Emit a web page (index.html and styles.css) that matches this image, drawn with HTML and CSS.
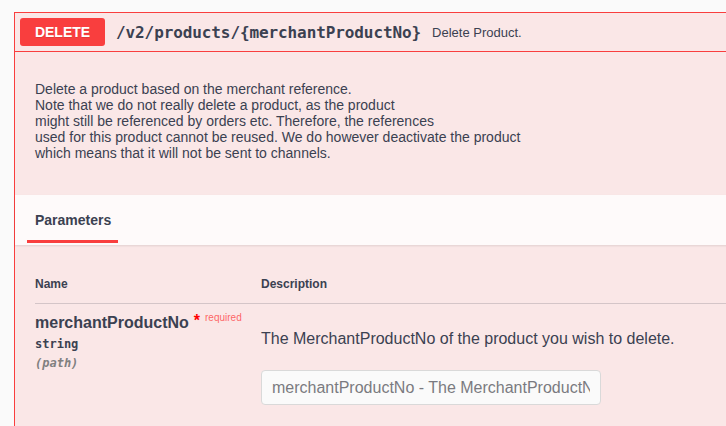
FILE: index.html
```html
<!DOCTYPE html>
<html>
<head>
<meta charset="utf-8">
<link rel="stylesheet" href="styles.css">
</head>
<body>
<div class="opblock">
  <div class="summary">
    <span class="method">DELETE</span>
    <span class="path">/v2/products/{merchantProductNo}</span>
    <span class="summary-desc">Delete Product.</span>
  </div>
  <div class="body">
    <div class="description">
      Delete a product based on the merchant reference.<br>
      Note that we do not really delete a product, as the product<br>
      might still be referenced by orders etc. Therefore, the references<br>
      used for this product cannot be reused. We do however deactivate the product<br>
      which means that it will not be sent to channels.
    </div>
    <div class="section-header">
      <h4 class="tab"><span>Parameters</span></h4>
    </div>
    <div class="params">
      <div class="row head">
        <div class="col-name">Name</div>
        <div class="col-desc">Description</div>
      </div>
      <div class="row param">
        <div class="col-name">
          <div class="pname">merchantProductNo<span class="star">*</span><span class="req">required</span></div>
          <div class="ptype">string</div>
          <div class="pin">(path)</div>
        </div>
        <div class="col-desc">
          <p class="pdesc">The MerchantProductNo of the product you wish to delete.</p>
          <input class="pinput" type="text" placeholder="merchantProductNo - The MerchantProductNo of the product you wish to delete.">
        </div>
      </div>
    </div>
  </div>
</div>
</body>
</html>
```

FILE: styles.css
```css
html, body {
  margin: 0;
  padding: 0;
  background: #fafafa;
  overflow: hidden;
  height: 426px;
}
body {
  padding: 12px 0 0 14px;
  font-family: "Liberation Sans", Arial, sans-serif;
  color: #3b4151;
}
.opblock {
  width: 760px;
  height: 500px;
  border: 1px solid #f93e3e;
  background: #fae7e7;
  box-sizing: border-box;
}
.summary {
  display: flex;
  align-items: center;
  padding: 5px;
  border-bottom: 1px solid #f93e3e;
}
.method {
  width: 85px;
  height: 28px;
  line-height: 28px;
  background: #f93e3e;
  color: #fff;
  font-weight: bold;
  font-size: 14px;
  text-align: center;
  border-radius: 3px;
  text-shadow: 0 1px 0 rgba(0,0,0,.1);
}
.path {
  margin-left: 11px;
  font-family: "DejaVu Sans Mono", monospace;
  font-weight: bold;
  font-size: 16px;
  color: #3b4151;
  letter-spacing: -0.1px;
}
.summary-desc {
  margin-left: 11px;
  font-size: 13px;
  color: #3b4151;
}
.description {
  padding: 30px 20px 0;
  font-size: 14px;
  line-height: 15.9px;
  height: 114px;
  box-sizing: border-box;
  margin-bottom: 29px;
}
.section-header {
  height: 50px;
  background: rgba(255,255,255,.8);
  box-shadow: 0 1px 2px rgba(0,0,0,.1);
  padding: 0 20px;
  display: flex;
  align-items: center;
}
.tab {
  margin: 0;
  font-size: 14px;
  font-weight: bold;
  color: #3b4151;
}
.tab span {
  position: relative;
  display: inline-block;
}
.tab span::after {
  content: "";
  position: absolute;
  left: -8px;
  right: -7px;
  bottom: -15px;
  height: 3px;
  background: #f93e3e;
}
.params {
  padding: 32px 0 0 20px;
}
.row {
  display: grid;
  grid-template-columns: 226px 1fr;
}
.head {
  font-size: 12px;
  font-weight: bold;
  padding-bottom: 12px;
  border-bottom: 1px solid rgba(59,65,81,.2);
  line-height: 14px;
}
.param {
  padding-top: 10px;
}
.pname {
  font-size: 16px;
  font-weight: bold;
  line-height: 18px;
}
.star {
  color: red;
  margin-left: 5px;
  position: relative;
  top: -2px;
}
.req {
  font-size: 10px;
  color: rgba(255,0,0,.6);
  font-weight: normal;
  position: relative;
  top: -7px;
  margin-left: 5px;
}
.ptype {
  font-family: "DejaVu Sans Mono", monospace;
  font-size: 12px;
  font-weight: bold;
  margin-top: 2px;
  line-height: 16px;
}
.pin {
  font-family: "DejaVu Sans Mono", monospace;
  font-size: 12px;
  font-style: italic;
  font-weight: bold;
  color: gray;
  margin-top: 3px;
  line-height: 16px;
}
.pdesc {
  margin: 16px 0 0;
  font-size: 16px;
  line-height: 18px;
}
.pinput {
  display: block;
  margin-top: 22px;
  width: 340px;
  height: 35px;
  box-sizing: border-box;
  border: 1px solid #d9d9d9;
  border-radius: 4px;
  background: #fafafa;
  padding: 0 10px;
  font-family: "Liberation Sans", Arial, sans-serif;
  font-size: 16px;
  color: #3b4151;
  outline: none;
}
.pinput::placeholder {
  color: #7a7a80;
}
```
